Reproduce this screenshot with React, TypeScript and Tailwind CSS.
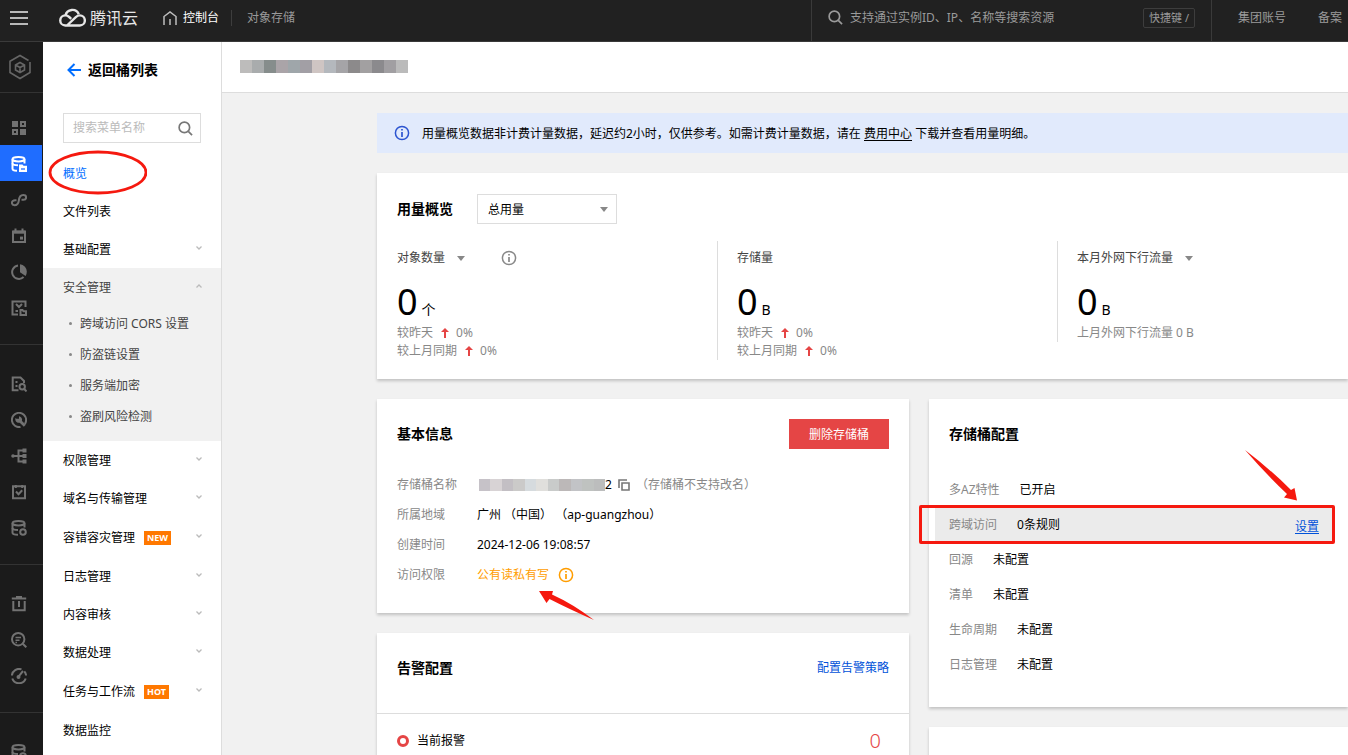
import React, { useState } from 'react';

type IconName =
  | 'grid' | 'bucket' | 'link' | 'calendar' | 'pie' | 'mail'
  | 'docSearch' | 'wrench' | 'tree' | 'check' | 'dbRing'
  | 'trash' | 'logSearch' | 'gauge';

const railGroups: IconName[][] = [
  ['grid', 'bucket', 'link', 'calendar', 'pie', 'mail'],
  ['docSearch', 'wrench', 'tree', 'check', 'dbRing'],
  ['trash', 'logSearch', 'gauge'],
  ['dbRing'],
];

interface MenuItem {
  label: string;
  expandable?: boolean;
  badge?: string;
  children?: string[];
}

const menu: MenuItem[] = [
  { label: '概览' },
  { label: '文件列表' },
  { label: '基础配置', expandable: true },
  { label: '安全管理', expandable: true, children: ['跨域访问 CORS 设置', '防盗链设置', '服务端加密', '盗刷风险检测'] },
  { label: '权限管理', expandable: true },
  { label: '域名与传输管理', expandable: true },
  { label: '容错容灾管理', expandable: true, badge: 'NEW' },
  { label: '日志管理', expandable: true },
  { label: '内容审核', expandable: true },
  { label: '数据处理', expandable: true },
  { label: '任务与工作流', expandable: true, badge: 'HOT' },
  { label: '数据监控' },
];

const bucketConfig = [
  { label: '多AZ特性', value: '已开启' },
  { label: '跨域访问', value: '0条规则', action: '设置' },
  { label: '回源', value: '未配置' },
  { label: '清单', value: '未配置' },
  { label: '生命周期', value: '未配置' },
  { label: '日志管理', value: '未配置' },
];

const titleMask = ['#bdbcbb', '#a9acad', '#868d8c', '#aaa4a8', '#9fa6aa', '#a29fa5', '#cfc5c3', '#b4b8bd', '#a5a4a7', '#8c8a8b', '#a2a0a1', '#8b8a8d', '#a19fa2', '#bbbbbb'];
const nameMask = ['#c6c2c8', '#d8d3d5', '#c3bfc4', '#cbcac9', '#d6dbde', '#e0dfdc', '#c9cbca', '#bcb8b8', '#c2c3c6', '#bfc2c0', '#bcbdbd'];

const railShapes: Record<IconName, React.ReactNode> = {
  grid: (
    <>
      <path d="M1 1h6v6H1zM9 9h6v6H9z" fill="currentColor" stroke="none" />
      <path d="M10 2h4v4h-4zM2 10h4v4H2z" />
    </>
  ),
  bucket: (
    <>
      <path d="M1.5 3.2v9.600c0 1.200 2 1.900 4.500 2M13.500 3.200v4.300" />
      <ellipse cx="7.500" cy="3.200" rx="6" ry="2.200" />
      <path d="M1.500 7.200c0 1.200 2.400 2 5.500 2" />
      <path d="M8 8.500h3.500l1 1.300H16V16H8z" fill="currentColor" stroke="none" />
      <path d="M10 13h4" stroke="#1f6dff" strokeWidth="1.300" />
    </>
  ),
  link: <path d="M5.500 8.300H4C2.300 8.300.9 9.300.9 10.800s1.100 2.400 2.600 2.400c3 0 4-2 4.300-4.600C8.100 5.800 9.500 3 12.200 3c1.700 0 2.900 1 2.900 2.400S14 7.800 12.500 7.800h-2" />,
  calendar: (
    <>
      <path d="M2 3.500h12v10.600H2z" />
      <path d="M2 4.200h12" strokeWidth="3" />
      <path d="M4.500.5V4M11.500.5V4" />
      <path d="M9 8.600h3v3H9z" fill="currentColor" stroke="none" />
    </>
  ),
  pie: (
    <>
      <path d="M7 1.400a6.800 6.800 0 1 0 5.600 11.700" />
      <path d="M9 .2a7.400 7.400 0 0 1 6.800 7.600c0 1.500-.4 2.900-1.200 4.200L9 8.300z" fill="currentColor" stroke="none" />
    </>
  ),
  mail: (
    <>
      <path d="M7 14.500H1.500V1.500h13V7" />
      <path d="m5 4 3 3 3-3" />
      <path d="M4.500 11H7" />
      <path d="M9.500 10h2l1 1.300H15V15H9.500z" />
    </>
  ),
  docSearch: (
    <>
      <path d="M7.500 14.300H1.700V1.500h7.800L13 5v2" />
      <path d="M4.500 6h2M4.500 10h2" />
      <circle cx="11.200" cy="10.700" r="2.700" />
      <path d="m13 12.800 2.500 2.600" />
    </>
  ),
  wrench: (
    <>
      <path d="M9.500 14.900A7.100 7.100 0 1 1 15.100 8c0 1.500-.4 2.800-1.200 4" />
      <path d="m8.500 8.500 5.300 5.300" strokeWidth="2.800" />
      <path d="M8 4.200v2.600H5.400l-1-.9c-.5 2.900 1 4.900 3.500 4.900 2 0 3.200-1.400 3.200-3.200S9.800 4.700 8 4.200z" fill="currentColor" stroke="none" />
    </>
  ),
  tree: (
    <>
      <path d="M3 8h10M13 2.500H7.500v11H13" />
      <circle cx="2" cy="8" r="1.800" fill="currentColor" stroke="none" />
      <path d="M11.500.5h4v4h-4zM11.500 6h4v4h-4zM11.500 11.500h4v4h-4z" fill="currentColor" stroke="none" />
    </>
  ),
  check: (
    <>
      <path d="M2 2.300h12v11.900H2z" />
      <path d="m5 7.500 2.500 2.700 3.700-4" />
      <path d="M4.800 1v3M11.200 1v3" />
    </>
  ),
  dbRing: (
    <>
      <path d="M1.500 3.200v9.600c0 1.200 2 1.900 5.500 2M13.500 3.200v4.300" />
      <ellipse cx="7.500" cy="3.200" rx="6" ry="2.200" />
      <path d="M1.500 8c0 1.200 2.400 2 5.500 2" />
      <circle cx="12" cy="12" r="2.800" />
    </>
  ),
  trash: <path d="M.8 2.500h14.400M5 1h6M2.300 5v9.200h11.400V5M8 5v6" />,
  logSearch: (
    <>
      <circle cx="7.200" cy="7.200" r="6.200" />
      <path d="m11.800 11.800 3.500 3.500" />
      <path d="M4.500 5.500h5.500M4.500 8.200h4M4.500 10.400h1.500" strokeWidth="1.500" />
    </>
  ),
  gauge: (
    <>
      <path d="M.9 7.500A7.100 7.100 0 0 1 10.500 1.400M13.300 3.300A7.100 7.100 0 0 1 15.100 7.500M14.700 10.500a7.100 7.100 0 0 1-13.400 0" />
      <path d="m12 3-4.500 5.600" />
      <circle cx="7.500" cy="9" r="2" fill="currentColor" stroke="none" />
    </>
  ),
};

function RailIcon({ name }: { name: IconName }) {
  return (
    <svg viewBox="0 0 16 16" className="h-4 w-4" fill="none" stroke="currentColor" strokeWidth="2">
      {railShapes[name]}
    </svg>
  );
}

function SearchIcon({ className }: { className: string }) {
  return (
    <svg viewBox="0 0 16 16" className={className} fill="none" stroke="currentColor" strokeWidth="1.800">
      <circle cx="6.800" cy="6.800" r="5.600" />
      <path d="m11 11 4 4" />
    </svg>
  );
}

function InfoIcon({ className }: { className: string }) {
  return (
    <svg viewBox="0 0 16 16" className={className} fill="none" stroke="currentColor" strokeWidth="1.500">
      <circle cx="8" cy="8" r="6.600" />
      <path d="M8 7v5M8 4v1.600" strokeWidth="1.700" />
    </svg>
  );
}

function Caret() {
  return (
    <svg viewBox="0 0 8 5" className="h-[5px] w-2 text-[#888]" fill="currentColor">
      <path d="M0 0h8L4 5z" />
    </svg>
  );
}

function Chevron({ open }: { open?: boolean }) {
  return (
    <svg viewBox="0 0 6 4" className="mb-[5px] h-1 w-1.5 text-[#bbb]" fill="none" stroke="currentColor" strokeWidth="1.300">
      <path d={open ? 'M.5 3.500 3 1l2.500 2.500' : 'M.5.500 3 3 5.500.500'} />
    </svg>
  );
}

function Mask({ colors, className }: { colors: string[]; className: string }) {
  return (
    <svg viewBox={`0 0 ${colors.length} 1`} preserveAspectRatio="none" shapeRendering="crispEdges" className={className}>
      {colors.map((color, i) => (
        <rect key={i} x={i} y="0" width="1" height="1" fill={color} />
      ))}
    </svg>
  );
}

function Trend({ label }: { label: string }) {
  return (
    <p className="flex items-center text-[#888] leading-[18px]">
      {label}
      <svg viewBox="0 0 8 10" className="ml-2 mr-[7px] h-[10px] w-2 text-[#e54545]" fill="currentColor">
        <path d="M4 0 8 4H5v6H3V4H0z" />
      </svg>
      0%
    </p>
  );
}

function Amount({ unit }: { unit: string }) {
  return (
    <p className="mt-3 flex h-[45px] items-baseline gap-1 text-black">
      <span className="text-4xl leading-[45px]">0</span>
      <span className="text-sm">{unit}</span>
    </p>
  );
}

function TopBar() {
  const [query, setQuery] = useState('');
  return (
    <header className="flex h-[42px] shrink-0 border-b border-[#3a3a3a] bg-[#212121] text-[#9a9a9a]">
      <div className="flex min-w-0 flex-1 items-center pb-1.5 pl-2.5">
        <button type="button" aria-label="菜单">
          <svg viewBox="0 0 18 14" className="h-3.5 w-[18px]" stroke="#b8b8b8" strokeWidth="2">
            <path d="M0 1h18M0 7h18M0 13h18" />
          </svg>
        </button>
        <a href="#" className="ml-[31px] flex items-center gap-1 text-base text-[#e6e6e6]">
          <svg viewBox="0 0 27 19" className="h-[19px] w-[27px]" fill="none" stroke="currentColor" strokeWidth="2.400">
            <path d="M6.500 7.500A7 7 0 0 1 19.800 6.200" />
            <path d="m8 17.500 8.800-8.300c1.300-1.200 2.600-1.800 4-1.800a5 5 0 0 1 0 10.100H6.300a5 5 0 0 1 0-10.100c1.500 0 2.700.5 3.900 1.600l2 1.900" />
          </svg>
          腾讯云
        </a>
        <a href="#" className="ml-[25px] flex items-center gap-1.5 text-white">
          <svg viewBox="0 0 14 14" className="h-3.5 w-3.5" fill="none" stroke="#bdbdbd" strokeWidth="1.500">
            <path d="M1 14V5.500L7 1l6 4.500V14M7 8v6" />
          </svg>
          控制台
        </a>
        <span className="ml-3 h-4 w-px bg-[#3d3d3d]" />
        <a href="#" className="ml-[15px]">对象存储</a>
      </div>
      <div className="flex w-[401px] items-center border-x border-[#3a3a3a] pb-1.5 pl-4 pr-4">
        <SearchIcon className="mr-[7px] h-[15px] w-[15px]" />
        <input
          aria-label="搜索资源"
          className="min-w-0 flex-1 bg-transparent outline-none placeholder:text-[#9a9a9a] placeholder:opacity-100"
          placeholder="支持通过实例ID、IP、名称等搜索资源"
          value={query}
          onChange={(e) => setQuery(e.target.value)}
        />
        <kbd className="rounded-xs border border-[#3d3d3d] px-[5px] font-[inherit] text-[11px] leading-[18px]">快捷键 /</kbd>
      </div>
      <nav className="flex items-center gap-8 whitespace-nowrap pb-1.5 pl-[26px] pr-1.5">
        <a href="#">集团账号</a>
        <a href="#">备案</a>
      </nav>
    </header>
  );
}

function Rail() {
  return (
    <nav className="flex w-[43px] shrink-0 flex-col overflow-hidden bg-[#1b1b1b] text-[#727272]">
      <a href="#" aria-label="产品" className="flex h-[51px] shrink-0 items-center justify-center border-b border-[#333] pr-1">
        <svg viewBox="0 0 24 26" className="h-[26px] w-6" fill="none" stroke="#666" strokeWidth="1.600">
          <path d="M22 8V18.500L12 24.500 2 18.500V7.200L12 1.500l8.500 5" />
          <path d="m12 8.500 4.500 2.500v5L12 18.500 7.500 16v-5zM7.500 11l4.500 2.500 4.500-2.500M12 13.500v5" />
        </svg>
      </a>
      {railGroups.map((group, i) => (
        <div key={i} className={i === 0 ? 'border-b border-[#333] pb-[19px] pt-4' : 'border-b border-[#333] pb-[18px] pt-[21px]'}>
          {group.map((name) => (
            <a
              key={name}
              href="#"
              aria-label={name}
              className={`mr-px flex h-9 items-center justify-center pr-1 ${i === 0 ? 'pt-0.5' : ''} ${name === 'bucket' ? 'bg-[#1f6dff] text-white' : ''}`}
            >
              <RailIcon name={name} />
            </a>
          ))}
        </div>
      ))}
    </nav>
  );
}

function SideMenu() {
  const [filter, setFilter] = useState('');
  return (
    <aside className="w-[179px] shrink-0 overflow-hidden border-r border-[#ddd] bg-white text-black">
      <a href="#" className="flex h-[71px] items-center gap-[7px] pb-4 pl-6 text-sm font-semibold">
        <svg viewBox="0 0 14 14" className="h-3.5 w-3.5" fill="none" stroke="#006eff" strokeWidth="2">
          <path d="M14 7H1.500M7.500 1l-6 6 6 6" />
        </svg>
        返回桶列表
      </a>
      <div className="ml-5 mr-5 flex h-[30px] items-center border border-[#ddd] pl-[9px] pr-[7px]">
        <input
          aria-label="搜索菜单名称"
          className="min-w-0 flex-1 outline-none placeholder:text-[#bbb]"
          placeholder="搜索菜单名称"
          value={filter}
          onChange={(e) => setFilter(e.target.value)}
        />
        <SearchIcon className="h-[15px] w-[15px] text-[#777]" />
      </div>
      <ul className="pt-[11px]">
        {menu.map((item, i) => (
          <li key={item.label} className={item.children ? 'bg-[#f1f1f1] pb-[9px] text-[#444]' : ''}>
            <a
              href="#"
              className={`relative flex items-center pl-5 pr-[19px] pt-0.5 ${item.badge ? 'h-10' : 'h-[38px]'} ${i === 0 ? 'text-[#006eff]' : ''}`}
            >
              <span>{item.label}</span>
              {item.badge && (
                <span className="ml-[9px] bg-[#ff7800] px-[3px] text-[9px] font-bold leading-[14px] text-white">{item.badge}</span>
              )}
              {item.expandable && (
                <span className="ml-auto">
                  <Chevron open={!!item.children} />
                </span>
              )}
              {i === 0 && (
                <svg viewBox="0 0 100 46" className="absolute -top-1 left-1 h-[46px] w-[100px]" fill="none" stroke="#f5190f" strokeWidth="2.800">
                  <ellipse cx="51" cy="22.500" rx="48" ry="20.500" />
                </svg>
              )}
            </a>
            {item.children && (
              <ul className="pt-0.5">
                {item.children.map((child) => (
                  <li key={child}>
                    <a href="#" className="flex h-[31px] items-center whitespace-nowrap pl-[26px]">
                      <span className="mr-2 h-[3px] w-[3px] rounded-full bg-[#888]" />
                      {child}
                    </a>
                  </li>
                ))}
              </ul>
            )}
          </li>
        ))}
      </ul>
    </aside>
  );
}

function UsageCard() {
  return (
    <section className="bg-white pb-[19px] pl-5 pt-5 shadow-[0_2px_3px_rgba(0,0,0,0.2)]">
      <div className="flex h-8 items-center">
        <h2 className="text-sm font-bold text-black">用量概览</h2>
        <div className="relative ml-6">
          <select aria-label="用量类型" className="block h-[30px] w-[140px] appearance-none border border-[#ddd] bg-white pl-2.5 pt-0.5 text-black">
            <option>总用量</option>
          </select>
          <span className="pointer-events-none absolute right-[9px] top-[13px]"><Caret /></span>
        </div>
      </div>
      <div className="mt-4 grid grid-cols-[320fr_340fr_291fr] items-start text-[#444]">
        <div className="pt-2">
          <div className="flex h-[18px] items-center">
            <button type="button" className="flex items-center gap-3">对象数量<Caret /></button>
            <InfoIcon className="ml-9 h-4 w-4 text-[#888]" />
          </div>
          <Amount unit="个" />
          <Trend label="较昨天" />
          <Trend label="较上月同期" />
        </div>
        <div className="border-l border-[#ddd] pl-[19px] pt-2">
          <div className="flex h-[18px] items-center">存储量</div>
          <Amount unit="B" />
          <Trend label="较昨天" />
          <Trend label="较上月同期" />
        </div>
        <div className="border-l border-[#ddd] pl-[19px] pt-2">
          <div className="flex h-[18px] items-center">
            <button type="button" className="flex items-center gap-3">本月外网下行流量<Caret /></button>
          </div>
          <Amount unit="B" />
          <p className="leading-[18px] text-[#888]">上月外网下行流量 0 B</p>
        </div>
      </div>
    </section>
  );
}

function BasicInfoCard() {
  return (
    <section className="relative bg-white px-5 pb-[23px] pt-5 text-black shadow-[0_2px_3px_rgba(0,0,0,0.2)]">
      <div className="flex items-center justify-between">
        <h2 className="text-sm font-bold">基本信息</h2>
        <button type="button" className="h-[30px] w-[100px] bg-[#e54545] pt-0.5 text-white">删除存储桶</button>
      </div>
      <dl className="mt-[21px] grid grid-cols-[80px_1fr] leading-[30px]">
        <dt className="text-[#888]">存储桶名称</dt>
        <dd className="flex items-center">
          <Mask colors={nameMask} className="ml-0.5 h-3 w-[126px]" />
          2
          <button type="button" aria-label="复制" className="ml-1.5">
            <svg viewBox="0 0 12 12" className="h-3 w-3 text-[#777]" fill="none" stroke="currentColor" strokeWidth="1.600">
              <path d="M4 4h7v7H4zM1 9V1h8" />
            </svg>
          </button>
          <span className="ml-1.5 text-[#888]">（存储桶不支持改名）</span>
        </dd>
        <dt className="text-[#888]">所属地域</dt>
        <dd>广州 （中国） （ap-guangzhou）</dd>
        <dt className="text-[#888]">创建时间</dt>
        <dd>2024-12-06 19:08:57</dd>
        <dt className="text-[#888]">访问权限</dt>
        <dd className="flex items-center gap-[9px] text-[#ff9d00]">
          公有读私有写
          <InfoIcon className="h-4 w-4" />
        </dd>
      </dl>
      <svg viewBox="0 0 56 30" className="absolute -bottom-2 left-[162px] z-10 h-[30px] w-14" fill="#f5190f">
        <path d="M0 0 14 0 13 3.500Q34 13 55 29Q30 18 10.500 8L7.500 12z" />
      </svg>
    </section>
  );
}

function AlarmCard() {
  return (
    <section className="bg-white text-black shadow-[0_2px_3px_rgba(0,0,0,0.2)]">
      <div className="flex h-[81px] items-center justify-between border-b border-[#ddd] px-5 pb-2.5">
        <h2 className="text-sm font-bold">告警配置</h2>
        <a href="#" className="text-[#0052d9]">配置告警策略</a>
      </div>
      <div className="flex items-center px-5 pb-5 pt-3">
        <span className="mr-2 h-3 w-3 rounded-full border-[3px] border-[#e54545]" />
        当前报警
        <span className="ml-auto mr-2 text-xl font-light leading-[30px] text-[#e54545]">0</span>
      </div>
    </section>
  );
}

function BucketConfigCard() {
  return (
    <section className="relative bg-white pb-[25px] pt-5 text-black shadow-[0_2px_3px_rgba(0,0,0,0.2)]">
      <h2 className="pl-5 text-sm font-bold leading-[30px]">存储桶配置</h2>
      <ul className="ml-1.5 mr-[15px] mt-[23px]">
        {bucketConfig.map((row) => (
          <li key={row.label} className={`relative flex h-[35px] items-center px-3.5 ${row.action ? 'bg-[#ebebeb]' : ''}`}>
            <span className="mr-5 text-[#888]">{row.label}</span>
            <span>{row.value}</span>
            {row.action && (
              <>
                <a href="#" className="ml-auto pt-1 text-[#0052d9] underline underline-offset-2">{row.action}</a>
                <span className="absolute -bottom-0.5 -left-4 -right-0.5 -top-0.5 rounded-xs border-[3px] border-[#f5190f]" />
              </>
            )}
          </li>
        ))}
      </ul>
      <svg viewBox="0 0 54 52" className="absolute right-[49px] top-[51px] h-[52px] w-[54px]" fill="#f5190f">
        <path d="M0 0Q25 19 46 40L49.500 38 52 50.500 39 47.500 42 44Q20 23 0 0z" />
      </svg>
    </section>
  );
}

export default function App() {
  return (
    <div className="flex h-screen flex-col overflow-hidden bg-[#f1f1f1] font-['Noto_Sans','Noto_Sans_CJK_SC',sans-serif] text-xs">
      <TopBar />
      <div className="flex min-h-0 flex-1">
        <Rail />
        <SideMenu />
        <main className="flex min-w-0 flex-1 flex-col overflow-hidden">
          <div className="flex h-[51px] shrink-0 items-center border-b border-[#ddd] bg-white pb-0.5 pl-[18px]">
            <Mask colors={titleMask} className="h-[13px] w-[168px]" />
          </div>
          <div className="flex flex-col gap-5 pl-[155px] pt-5">
            <div className="flex h-10 items-center bg-[#e1eafc] pl-[17px] text-black">
              <InfoIcon className="mr-3 h-4 w-4 text-[#2c54d0]" />
              <p className="pt-0.5">
                用量概览数据非计费计量数据，延迟约2小时，仅供参考。如需计费计量数据，请在{' '}
                <a href="#" className="underline underline-offset-2">费用中心</a> 下载并查看用量明细。
              </p>
            </div>
            <UsageCard />
            <div className="grid grid-cols-[532fr_419fr] items-start gap-5">
              <div className="flex flex-col gap-5">
                <BasicInfoCard />
                <AlarmCard />
              </div>
              <div className="flex flex-col gap-5">
                <BucketConfigCard />
                <section className="h-24 bg-white shadow-[0_2px_3px_rgba(0,0,0,0.2)]" />
              </div>
            </div>
          </div>
        </main>
      </div>
    </div>
  );
}
